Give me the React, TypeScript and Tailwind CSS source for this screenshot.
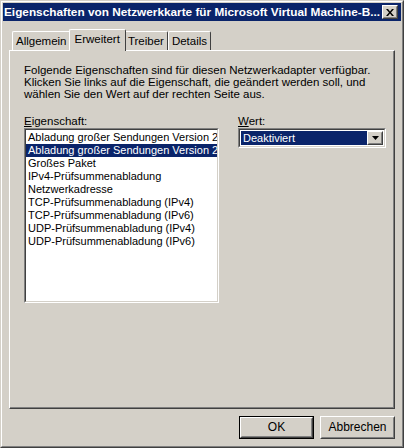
import React from 'react';

const items = [
  'Abladung großer Sendungen Version 2 (IPv4)',
  'Abladung großer Sendungen Version 2 (IPv6)',
  'Großes Paket',
  'IPv4-Prüfsummenabladung',
  'Netzwerkadresse',
  'TCP-Prüfsummenabladung (IPv4)',
  'TCP-Prüfsummenabladung (IPv6)',
  'UDP-Prüfsummenabladung (IPv4)',
  'UDP-Prüfsummenabladung (IPv6)',
];

const tabs = ['Allgemein', 'Erweitert', 'Treiber', 'Details'];

// classic raised 3d frame
const Raised: React.FC<{ className?: string; children?: React.ReactNode }> = ({ className = '', children }) => (
  <div className={`border border-t-white border-l-white border-b-[#404040] border-r-[#404040] ${className}`}>
    <div className="h-full w-full border border-t-[#d4d0c8] border-l-[#d4d0c8] border-b-[#808080] border-r-[#808080] flex items-center justify-center">
      {children}
    </div>
  </div>
);

const Sunken: React.FC<{ className?: string; children?: React.ReactNode }> = ({ className = '', children }) => (
  <div className={`border border-t-[#808080] border-l-[#808080] border-b-white border-r-white ${className}`}>
    <div className="h-full w-full border border-t-[#404040] border-l-[#404040] border-b-[#d4d0c8] border-r-[#d4d0c8] bg-white overflow-hidden">
      {children}
    </div>
  </div>
);

const App: React.FC = () => {
  return (
    <div
      className="w-[404px] h-[448px] bg-[#d4d0c8] text-[11px] leading-[13px] text-black"
      style={{ fontFamily: '"Liberation Sans", Arial, sans-serif' }}
    >
      <div className="h-full w-full border border-t-[#d4d0c8] border-l-[#d4d0c8] border-b-[#404040] border-r-[#404040]">
        <div className="h-full w-full border border-t-white border-l-white border-b-[#808080] border-r-[#808080] p-px flex flex-col">
          {/* title bar */}
          <div className="h-[18px] bg-[#0a246a] flex items-center pl-[1px] pr-[3px]">
            <span className="flex-1 text-white font-bold text-[11.8px] whitespace-nowrap overflow-hidden">
              Eigenschaften von Netzwerkkarte für Microsoft Virtual Machine-B...
            </span>
            <Raised className="w-[16px] h-[14px] bg-[#d4d0c8]">
              <svg width="8" height="7" viewBox="0 0 8 7">
                <path d="M0 0h2l2 2.5L6 0h2L5 3.5 8 7H6L4 4.5 2 7H0l3-3.5z" fill="#000" />
              </svg>
            </Raised>
          </div>

          {/* tabs */}
          <div className="flex items-end h-[29px] pl-[3px] ml-[6px]">
            {tabs.map((t) => {
              const active = t === 'Erweitert';
              return (
                <div
                  key={t}
                  className={`relative border-t border-l border-t-white border-l-white border-r border-r-[#404040] rounded-tl-[2px] rounded-tr-[2px] flex items-center justify-center bg-[#d4d0c8] ${
                    active ? 'h-[22px] px-[5px] -mx-[2px] z-10 -mb-px pb-[3px]' : 'h-[19px] px-[3px]'
                  }`}
                >
                  <span className="text-[11.5px]">{t}</span>
                </div>
              );
            })}
          </div>

          {/* panel */}
          <div className="mx-[6px] h-[359px] border-t border-l border-t-white border-l-white border-b border-r border-b-[#404040] border-r-[#404040]">
            <div className="h-full border-b border-r border-b-[#808080] border-r-[#808080] pl-[14px] pr-[7px] pt-[13px]">
              <p className="w-[350px] text-[11.5px] leading-[12px]">
                Folgende Eigenschaften sind für diesen Netzwerkadapter verfügbar.
                <br />
                Klicken Sie links auf die Eigenschaft, die geändert werden soll, und
                <br />
                wählen Sie den Wert auf der rechten Seite aus.
              </p>
              <div className="flex mt-[15px]">
                <div className="w-[195px]">
                  <div className="h-[13px] text-[11.5px]">
                    <span className="underline">E</span>igenschaft:
                  </div>
                  <Sunken className="h-[175px]">
                    <div className="pt-[1px]">
                      {items.map((it, i) => (
                        <div
                          key={it}
                          className={`h-[13px] leading-[13px] pl-[2px] whitespace-nowrap ${
                            i === 1 ? 'bg-[#0a246a] text-white' : ''
                          }`}
                        >
                          {it}
                        </div>
                      ))}
                    </div>
                  </Sunken>
                </div>
                <div className="ml-[19px] w-[149px]">
                  <div className="h-[13px] text-[11.5px]">
                    <span className="underline">W</span>ert:
                  </div>
                  <Sunken className="h-[20px]">
                    <div className="flex h-full p-px">
                      <div className="flex-1 bg-[#0a246a] text-white pl-[2px] flex items-center">Deaktiviert</div>
                      <Raised className="w-[16px] h-full bg-[#d4d0c8]">
                        <svg width="7" height="4" viewBox="0 0 7 4">
                          <path d="M0 0h7L3.5 4z" fill="#000" />
                        </svg>
                      </Raised>
                    </div>
                  </Sunken>
                </div>
              </div>
            </div>
          </div>

          {/* buttons */}
          <div className="flex justify-end gap-[6px] mr-[6px] mt-[7px]">
            <div className="border border-black">
              <Raised className="w-[73px] h-[21px] bg-[#d4d0c8]">
                <span className="text-[12px]">OK</span>
              </Raised>
            </div>
            <Raised className="w-[75px] h-[23px] bg-[#d4d0c8]">
              <span className="text-[12px]">Abbrechen</span>
            </Raised>
          </div>
        </div>
      </div>
    </div>
  );
};

export default App;
